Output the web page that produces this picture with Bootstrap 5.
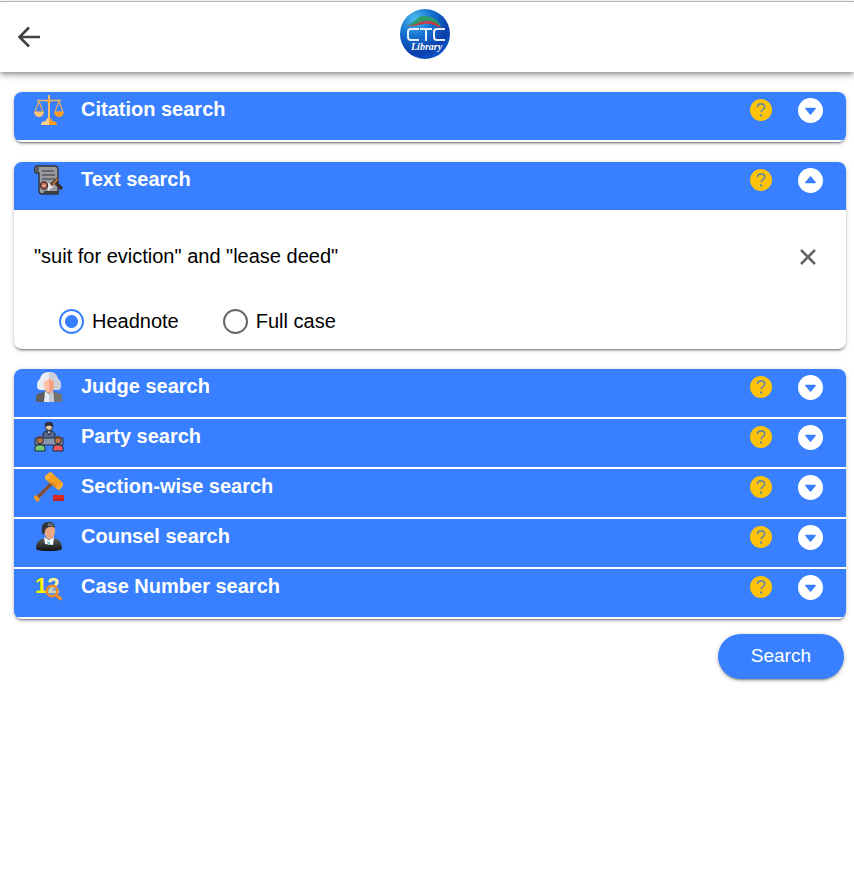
<!DOCTYPE html>
<html lang="en">
<head>
<meta charset="utf-8">
<meta name="viewport" content="width=device-width, initial-scale=1">
<title>CTC Library</title>
<link href="https://cdn.jsdelivr.net/npm/bootstrap@5.3.0/dist/css/bootstrap.min.css" rel="stylesheet">
<style>
  :root { --brand: #3880ff; --help: #ffc409; }
  body { font-family: "Liberation Sans", Arial, sans-serif; font-size: 20px; line-height: 24px; color: #000; background: #fff; }
  svg { display: block; }
  .topbar { border-top: 1px solid #b5b5b5; margin-top: 1px; height: 71px; padding: 0 20px 0 16px; background: #fff; box-shadow: 0 2px 4px -1px rgba(0,0,0,.3), 0 4px 5px rgba(0,0,0,.16), 0 1px 12px rgba(0,0,0,.12); display: grid; grid-template-columns: 1fr auto 1fr; }
  .brand-link { margin-top: 7px; }
  .page { padding: 20px 8px 20px 14px; }
  .panel { border-radius: 8px; overflow: hidden; background: #fff; box-shadow: 0 3px 1px -2px rgba(0,0,0,.25), 0 2px 2px rgba(0,0,0,.18), 0 1px 5px rgba(0,0,0,.18); }
  .panel-gap { margin-bottom: 20px; }
  .bar { height: 48px; padding: 3px 23px 0 20px; background: var(--brand); color: #fff; }
  .ruled { border-bottom: 2px solid #fff; height: 50px; }
  .bar h2 { font-size: 20px; line-height: 24px; font-weight: 700; margin: 2px 0 0 17px; }
  .tools { gap: 26px; margin-top: 2px; height: 26px; }
  .plain { border: 0; padding: 0; background: transparent; }
  .panel-inner { padding: 21px 29px 15px 20px; }
  .query { font-size: 20px; line-height: 24px; height: 50px; border: 0; padding: 0; color: #000; background: transparent; box-shadow: none; }
  .choices { margin-top: 28px; padding-left: 25px; gap: 44px; }
  .choices input { appearance: none; width: 25px; height: 25px; margin: 0; border: 2px solid #666; border-radius: 50%; background: #fff; }
  .choices input:checked { border-color: var(--brand); background: radial-gradient(circle, var(--brand) 6px, #fff 7px); }
  .choices label { line-height: 25px; }
  .btn-search { --bs-btn-color: #fff; --bs-btn-bg: var(--brand); --bs-btn-hover-color: #fff; --bs-btn-hover-bg: #3171e0; font-size: 19px; line-height: 22px; height: 45px; padding: 0 33px 2px; margin: 15px 2px 0 0; border: 0; box-shadow: 0 3px 1px -2px rgba(0,0,0,.2), 0 2px 2px rgba(0,0,0,.14), 0 1px 5px rgba(0,0,0,.2); }
  .logo-sub { font: italic 700 10px "Liberation Serif", serif; }
  .digits { font: 700 22px "Liberation Sans", Arial, sans-serif; }
</style>
<script src="https://cdn.jsdelivr.net/npm/bootstrap@5.3.0/dist/js/bootstrap.bundle.min.js"></script>
</head>
<body>
<svg width="0" height="0" class="position-absolute" aria-hidden="true">
  <symbol id="help" viewBox="0 0 22 22"><circle cx="11" cy="11" r="11" fill="#ffc409"/><path d="M7.500 8.200C7.500 6 9 4.900 11 4.900s3.700 1.200 3.700 3.100c0 2.600-3.600 2.700-3.600 5.300" fill="none" stroke="#6b8a9c" stroke-width="1.700"/><circle cx="11.100" cy="16.500" r="1.200" fill="#6b8a9c"/></symbol>
  <symbol id="down" viewBox="0 0 24 24"><circle cx="12" cy="12" r="12" fill="#fff"/><path d="M7.600 10h8.800L12 15.400z" fill="#3880ff" stroke="#3880ff" stroke-width="1.400" stroke-linejoin="round"/></symbol>
  <symbol id="up" viewBox="0 0 24 24"><circle cx="12" cy="12" r="12" fill="#fff"/><path d="M7.600 14h8.800L12 8.600z" fill="#3880ff" stroke="#3880ff" stroke-width="1.400" stroke-linejoin="round"/></symbol>
</svg>

<header class="topbar align-items-start">
  <button class="plain me-auto mt-4" type="button" aria-label="Back">
    <svg width="26" height="22" viewBox="0 0 26 22" fill="none" stroke="#424242" stroke-width="2.600"><path d="M13 1.500 3.500 11l9.500 9.500M3 11h21"/></svg>
  </button>
  <a class="brand-link" href="#" aria-label="CTC Library">
    <svg width="50" height="50" viewBox="0 0 50 50">
      <defs><radialGradient id="orb" cx=".3" cy=".2" r=".85"><stop offset="0" stop-color="#4cbcf0"/><stop offset=".4" stop-color="#1673d2"/><stop offset=".8" stop-color="#0b3eaa"/><stop offset="1" stop-color="#0c55c8"/></radialGradient></defs>
      <circle cx="25" cy="25" r="25" fill="url(#orb)"/>
      <path d="M6 17C14 15 17 7 24 7c8 0 15 4 17 11-6-5-11-7-17-6-6 2-10 5-18 5z" fill="#2c9b68"/>
      <path d="M6 17c9 0 14-5 21-5 6 0 11 2 14 7-7-4-12-5-18-4-6 1-10 3-17 2z" fill="#c73b46"/>
      <g fill="none" stroke="#e7effa" stroke-width="2"><path d="M19 20h-8q-3 0-3 3v5q0 3 3 3h8M20 20h12M26 20v12M45 20h-8q-3 0-3 3v5q0 3 3 3h8"/></g>
      <text class="logo-sub" x="11" y="41" fill="#fff">Library</text>
    </svg>
  </a>
</header>

<main class="page">
  <section class="panel panel-gap">
    <div class="bar ruled d-flex align-items-start">
      <svg width="30" height="30" viewBox="0 0 30 30" aria-hidden="true">
        <path d="M14 0h2v24h-2z" fill="#f3bd73"/><circle cx="15" cy="6" r="2" fill="#ff9811"/>
        <path d="M3 5.500h24" stroke="#eeb367" stroke-width="1.600"/>
        <path d="M5 6 1 17h8zM25 6l-4 11h8z" fill="none" stroke="#d9a765" stroke-width="1.300"/>
        <path d="M0 17h10q-1 5-5 5t-5-5z" fill="#ffc477"/><path d="M20 17h10q-1 5-5 5t-5-5z" fill="#ff9a20"/>
        <path d="M7 30q0-4 5-4 0-3 3-3v7z" fill="#ffd08d"/><path d="M15 23q3 0 3 3 5 0 5 4h-8z" fill="#ff9a20"/>
      </svg>
      <h2>Citation search</h2>
      <div class="tools d-flex align-items-center ms-auto">
        <button class="plain" type="button" aria-label="Help on citation search"><svg width="22" height="22"><use href="#help"/></svg></button>
        <button class="plain" type="button" aria-label="Expand citation search"><svg width="25" height="25"><use href="#down"/></svg></button>
      </div>
    </div>
  </section>

  <section class="panel panel-gap">
    <div class="bar d-flex align-items-start">
      <svg width="30" height="30" viewBox="0 0 30 30" aria-hidden="true">
        <path d="M2 1h19q3 0 3 4v24H8q-3 0-3-4V8H2q-3-3 0-7z" fill="#9a9b9e" stroke="#303238" stroke-width="1.400"/>
        <path d="M1 2h4v5H2z" fill="#5b5d62"/>
        <path d="M8 6h12M8 10h13M8 14h13" stroke="#55575c" stroke-width="1.400"/><path d="M10 26h15v3H9z" fill="#3d4046"/>
        <path d="m13 17 7 4-6 5z" fill="#e4e4e4"/>
        <circle cx="10" cy="20.500" r="3.600" fill="#b96254" stroke="#44302e" stroke-width="1.200"/><path d="M8.500 20.500h3M10 19v3" stroke="#e8c4ac"/>
        <path d="m17 20 7-6M22 18l6 6" stroke="#3a2b28" stroke-width="3.200"/><path d="m18 20 6-6" stroke="#b5703c" stroke-width="2"/>
      </svg>
      <h2>Text search</h2>
      <div class="tools d-flex align-items-center ms-auto">
        <button class="plain" type="button" aria-label="Help on text search"><svg width="22" height="22"><use href="#help"/></svg></button>
        <button class="plain" type="button" aria-label="Collapse text search"><svg width="25" height="25"><use href="#up"/></svg></button>
      </div>
    </div>
    <div class="panel-inner">
      <div class="d-flex align-items-center">
        <input class="query form-control flex-grow-1" type="text" aria-label="Search text" value="&quot;suit for eviction&quot; and &quot;lease deed&quot;">
        <button class="plain" type="button" aria-label="Clear"><svg width="18" height="20" viewBox="0 0 18 20" stroke="#666" stroke-width="2.600"><path d="m2 4 14 14M16 4 2 18"/></svg></button>
      </div>
      <div class="choices d-flex">
        <div class="d-flex gap-2"><input type="radio" name="scope" id="headnote" checked><label for="headnote">Headnote</label></div>
        <div class="d-flex gap-2"><input type="radio" name="scope" id="fullcase"><label for="fullcase">Full case</label></div>
      </div>
    </div>
  </section>

  <section class="panel">
    <div class="bar ruled d-flex align-items-start">
      <svg width="30" height="30" viewBox="0 0 30 30" aria-hidden="true">
        <path d="M2 30v-5q0-4 5-4l5-2h6l5 2q5 0 5 4v5z" fill="#5d5d60"/><path d="M15 19h3l5 2q5 0 5 4v5H15z" fill="#737376"/>
        <path d="M15 0C9 0 7 3 6 7c-4 2-4 11 0 11h18c4 0 4-9 0-11-1-4-3-7-9-7z" fill="#e9edf2"/><path d="M15 0c6 0 8 3 9 7 4 2 4 11 0 11h-9z" fill="#cbd0d8"/>
        <path d="M10 9q5-1 5-3 1 2 5 3v6q-1 5-5 6-4-1-5-6z" fill="#ffc0a8"/><path d="M15 6q1 2 5 3v6q-1 5-5 6z" fill="#f79f85"/>
        <path d="m11 19 4 3 4-3 1 11H10z" fill="#e8edf3"/><path d="m15 22 4-3 1 11h-5z" fill="#c5ccd5"/>
      </svg>
      <h2>Judge search</h2>
      <div class="tools d-flex align-items-center ms-auto">
        <button class="plain" type="button" aria-label="Help on judge search"><svg width="22" height="22"><use href="#help"/></svg></button>
        <button class="plain" type="button" aria-label="Expand judge search"><svg width="25" height="25"><use href="#down"/></svg></button>
      </div>
    </div>
    <div class="bar ruled d-flex align-items-start">
      <svg width="30" height="30" viewBox="0 0 30 30" aria-hidden="true">
        <g stroke="#22293a" stroke-width="1">
        <path d="M9 17v-4q0-3 3-4h6q3 1 3 4v4z" fill="#56668a"/><path d="m13 9 2 4 2-4z" fill="#fff"/>
        <path d="M1 16h28v7H1z" fill="#8796ad"/>
        <circle cx="15" cy="5" r="3.500" fill="#e7c6a0"/><path d="M11 4q0-4 4-4t4 4q-4-2-8 0z" fill="#343436"/>
        <circle cx="6" cy="18.500" r="3.300" fill="#b67849"/><circle cx="24" cy="18.500" r="3.300" fill="#b67849"/>
        <path d="M1 29v-3q0-3 3-3h4q3 0 3 3v3z" fill="#75ce72"/><path d="M19 29v-3q0-3 3-3h4q3 0 3 3v3z" fill="#ed5961"/></g>
        <path d="M3 17q0-3 3-3t3 3q-3-1-6 0zM21 17q0-3 3-3t3 3q-3-1-6 0z" fill="#6b4229"/>
      </svg>
      <h2>Party search</h2>
      <div class="tools d-flex align-items-center ms-auto">
        <button class="plain" type="button" aria-label="Help on party search"><svg width="22" height="22"><use href="#help"/></svg></button>
        <button class="plain" type="button" aria-label="Expand party search"><svg width="25" height="25"><use href="#down"/></svg></button>
      </div>
    </div>
    <div class="bar ruled d-flex align-items-start">
      <svg width="30" height="30" viewBox="0 0 30 30" aria-hidden="true">
        <path d="M17 12 4 25" stroke="#84502f" stroke-width="3.400"/><path d="m0 24 2-1 4 4-2 3-2-1-2-3z" fill="#f39b25"/>
        <path d="m16 0 2 1 11 10v2l-4 5-2-1L11 7V5z" fill="#f6a01f"/><path d="m16 0 3 2-6 6-2-2V4zM28 11l1 3-4 4-3-2z" fill="#f7ae3b"/><path d="m13 8 9 8-1-4z" fill="#dd8522"/>
        <path d="M19 23h11v6H19z" fill="#db2722"/><path d="M19 27h11v2H19z" fill="#b7242c"/>
      </svg>
      <h2>Section-wise search</h2>
      <div class="tools d-flex align-items-center ms-auto">
        <button class="plain" type="button" aria-label="Help on section-wise search"><svg width="22" height="22"><use href="#help"/></svg></button>
        <button class="plain" type="button" aria-label="Expand section-wise search"><svg width="25" height="25"><use href="#down"/></svg></button>
      </div>
    </div>
    <div class="bar ruled d-flex align-items-start">
      <svg width="30" height="30" viewBox="0 0 30 30" aria-hidden="true">
        <defs><linearGradient id="robe" x2="0" y2="1"><stop stop-color="#606060"/><stop offset="1" stop-color="#111"/></linearGradient></defs>
        <path d="M2 27q0-9 8-11h10q8 2 8 11-2 2-13 2T2 27z" fill="url(#robe)"/>
        <path d="m10 15 5 3 5-3-1 8-8-1z" fill="#f6fafb"/><path d="m13 19 3 1v3h-2z" fill="#7dc9cb"/>
        <path d="M10 6q1-5 6-5 5 0 5 7 0 7-4 9h-3q-4-3-4-11z" fill="#eaa581"/>
        <path d="M8 11Q6 1 13 0q8-1 8 6-3-2-6-1-4 1-4 5l-2 3z" fill="#34373d"/><path d="M14 1q5 0 6 4-3-2-6-1z" fill="#747982"/>
      </svg>
      <h2>Counsel search</h2>
      <div class="tools d-flex align-items-center ms-auto">
        <button class="plain" type="button" aria-label="Help on counsel search"><svg width="22" height="22"><use href="#help"/></svg></button>
        <button class="plain" type="button" aria-label="Expand counsel search"><svg width="25" height="25"><use href="#down"/></svg></button>
      </div>
    </div>
    <div class="bar ruled d-flex align-items-start">
      <svg width="30" height="30" viewBox="0 0 30 30" aria-hidden="true">
        <text class="digits" x="1" y="21"><tspan fill="#fff200">1</tspan><tspan fill="#f3f0a0">2</tspan></text>
        <circle cx="18" cy="19" r="5.300" fill="#9aaccb" fill-opacity=".4" stroke="#f18a22" stroke-width="2.400"/><path d="m22 23 5.500 4.500" stroke="#f18a22" stroke-width="3"/>
      </svg>
      <h2>Case Number search</h2>
      <div class="tools d-flex align-items-center ms-auto">
        <button class="plain" type="button" aria-label="Help on case number search"><svg width="22" height="22"><use href="#help"/></svg></button>
        <button class="plain" type="button" aria-label="Expand case number search"><svg width="25" height="25"><use href="#down"/></svg></button>
      </div>
    </div>
  </section>

  <div class="d-flex justify-content-end">
    <button class="btn btn-search rounded-pill" type="submit">Search</button>
  </div>
</main>
</body>
</html>
